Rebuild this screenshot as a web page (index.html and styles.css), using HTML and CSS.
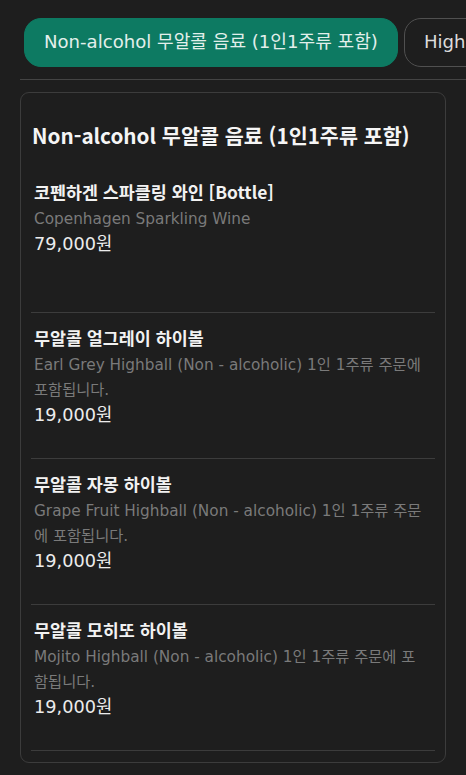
FILE: index.html
```html
<!DOCTYPE html>
<html lang="ko">
<head>
<meta charset="utf-8">
<title>Menu</title>
<link rel="stylesheet" href="styles.css">
</head>
<body>
<div class="page">
  <nav class="tabs">
    <button class="tab active">Non-alcohol 무알콜 음료 (1인1주류 포함)</button>
    <button class="tab">Highball 하이볼</button>
  </nav>
  <section class="card">
    <h2 class="card-title">Non-alcohol 무알콜 음료 (1인1주류 포함)</h2>
    <ul class="items">
      <li class="item">
        <div class="name">코펜하겐 스파클링 와인 [Bottle]</div>
        <div class="desc">Copenhagen Sparkling Wine</div>
        <div class="price">79,000원</div>
      </li>
      <li class="item">
        <div class="name">무알콜 얼그레이 하이볼</div>
        <div class="desc">Earl Grey Highball (Non - alcoholic) 1인 1주류 주문에 포함됩니다.</div>
        <div class="price">19,000원</div>
      </li>
      <li class="item">
        <div class="name">무알콜 자몽 하이볼</div>
        <div class="desc">Grape Fruit Highball (Non - alcoholic) 1인 1주류 주문에 포함됩니다.</div>
        <div class="price">19,000원</div>
      </li>
      <li class="item">
        <div class="name">무알콜 모히또 하이볼</div>
        <div class="desc">Mojito Highball (Non - alcoholic) 1인 1주류 주문에 포함됩니다.</div>
        <div class="price">19,000원</div>
      </li>
    </ul>
  </section>
</div>
</body>
</html>
```

FILE: styles.css
```css
html, body {
  margin: 0;
  padding: 0;
  background: #1e1e1e;
  height: 100%;
}
body {
  font-family: "DejaVu Sans", "Noto Sans CJK KR", sans-serif;
  color: #ececec;
  overflow: hidden;
}
.page {
  padding: 18px 0 0 20px;
}
.tabs {
  display: flex;
  gap: 6px;
  padding: 0 0 12px 4px;
  border-bottom: 1px solid #444;
  white-space: nowrap;
  overflow: hidden;
}
.tab {
  flex: none;
  height: 49px;
  padding: 0 19px;
  border-radius: 17px;
  border: 1px solid #505050;
  background: #1e1e1e;
  color: #dcdcdc;
  font-family: inherit;
  font-size: 18.1px;
  line-height: 1;
}
.tab.active {
  background: #0d7a62;
  border-color: #0d7a62;
  color: #e2efeb;
}
.card {
  margin: 12px 20px 0 0;
  border: 1px solid #3c3c3c;
  border-radius: 9px;
  padding: 27px 10px 11px;
}
.card-title {
  margin: 0 0 17px 1px;
  font-family: "Noto Sans CJK KR", sans-serif;
  font-size: 20.7px;
  font-weight: 700;
  line-height: 30px;
  color: #f5f5f5;
}
.items {
  list-style: none;
  margin: 0;
  padding: 0;
}
.item {
  box-sizing: border-box;
  min-height: 146px;
  padding: 12px 9px 0 3px;
  border-bottom: 1px solid #3c3c3c;
}
.name {
  font-family: "Noto Sans CJK KR", sans-serif;
  font-size: 17.4px;
  font-weight: 700;
  line-height: 26px;
  color: #f2f2f2;
}
.desc {
  margin-top: 2px;
  font-size: 15.3px;
  line-height: 25px;
  color: #7a7a7a;
}
.price {
  font-size: 17.7px;
  line-height: 25px;
  color: #ececec;
}
```
